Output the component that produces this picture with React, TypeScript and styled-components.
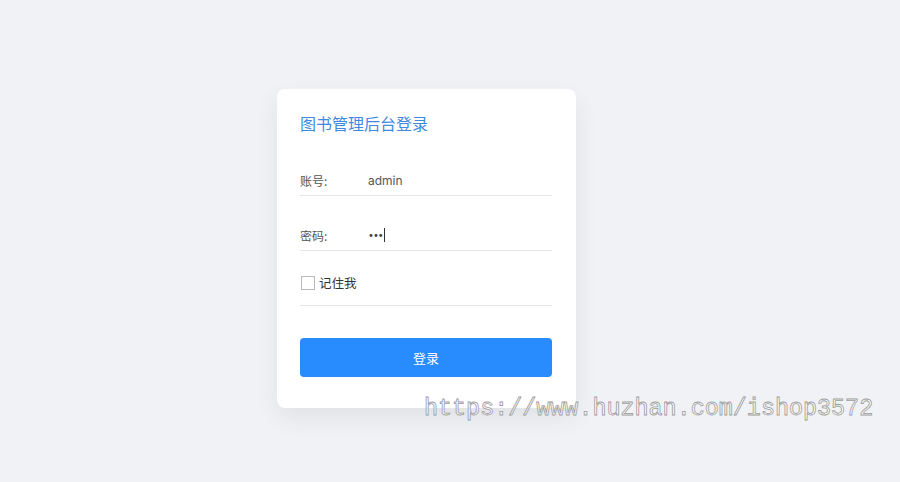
import React from "react";
import styled, { createGlobalStyle } from "styled-components";

const GlobalStyle = createGlobalStyle`
  html, body {
    margin: 0;
    padding: 0;
    background: #f0f2f5;
    font-family: "Noto Sans", "Noto Sans CJK SC", sans-serif;
  }
`;

const Page = styled.div`
  position: relative;
  width: 900px;
  height: 482px;
  box-sizing: border-box;
  padding: 89px 0 0 277px;
  background: #f0f2f5;
  overflow: hidden;
`;

const Card = styled.div`
  width: 299px;
  height: 319px;
  box-sizing: border-box;
  padding: 23px 24px 0 23px;
  background: #fff;
  border-radius: 8px;
  box-shadow: 0 10px 26px rgba(0, 0, 0, 0.07);
`;

const Title = styled.h1`
  margin: 0;
  font-size: 16px;
  line-height: 22px;
  font-weight: 400;
  color: #3f8ae0;
  font-family: "Noto Sans CJK SC", sans-serif;
`;

const Form = styled.form`
  margin: 31px 0 0;
  display: flex;
  flex-direction: column;
`;

const Row = styled.div<{ $top?: boolean }>`
  height: 30px;
  margin-top: 24px;
  display: flex;
  align-items: ${(p) => (p.$top ? "flex-start" : "center")};
  border-bottom: 1px solid #e6e6e6;
  &:first-child {
    margin-top: 0;
  }
`;

const Label = styled.span`
  width: 68px;
  font-size: 12px;
  color: #555;
  font-family: "Noto Sans CJK SC", sans-serif;
`;

const Value = styled.span`
  font-size: 12px;
  color: #555;
  font-family: Inter, "Noto Sans", sans-serif;
`;

const Dots = styled.span`
  font-size: 10px;
  letter-spacing: -1px;
  color: #444;
  font-family: "DejaVu Sans", sans-serif;
`;

const Caret = styled.span`
  display: inline-block;
  width: 1px;
  height: 14px;
  margin-left: 1px;
  background: #333;
`;

const Check = styled.span`
  width: 12px;
  height: 12px;
  margin: 1px 4px 0 1px;
  border: 1px solid #b8b8b8;
  background: #fff;
`;

const CheckText = styled.span`
  font-size: 12.5px;
  line-height: 15px;
  color: #333;
  font-family: "Noto Sans CJK SC", sans-serif;
`;

const Button = styled.button`
  margin-top: 32px;
  height: 39px;
  width: 100%;
  border: none;
  border-radius: 4px;
  background: #288cff;
  color: #fff;
  font-size: 13px;
  font-family: "Noto Sans CJK SC", sans-serif;
  cursor: pointer;
`;

const Watermark = styled.div`
  position: absolute;
  left: 424px;
  top: 396px;
  font-family: "Liberation Mono", monospace;
  font-size: 23.4px;
  color: rgba(255, 255, 255, 0.85);
  -webkit-text-stroke: 0.8px #9c9c9c;
  white-space: nowrap;
  pointer-events: none;
`;

export default function App() {
  return (
    <>
      <GlobalStyle />
      <Page>
        <Card>
          <Title>图书管理后台登录</Title>
          <Form onSubmit={(e) => e.preventDefault()}>
            <Row>
              <Label>账号:</Label>
              <Value>admin</Value>
            </Row>
            <Row>
              <Label>密码:</Label>
              <Dots>•••</Dots>
              <Caret />
            </Row>
            <Row $top>
              <Check />
              <CheckText>记住我</CheckText>
            </Row>
            <Button type="submit">登录</Button>
          </Form>
        </Card>
        <Watermark>https://www.huzhan.com/ishop3572</Watermark>
      </Page>
    </>
  );
}
